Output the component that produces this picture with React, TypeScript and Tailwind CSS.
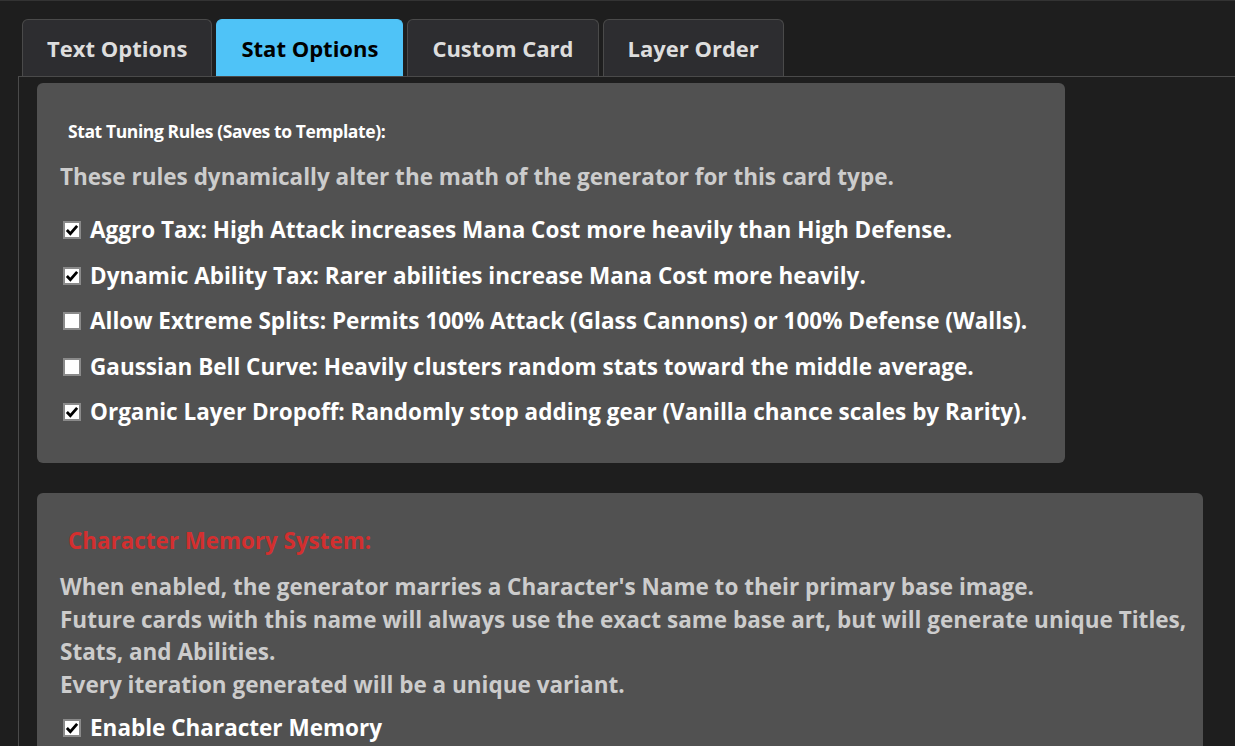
import React, { useState } from 'react';

const tabs = ['Text Options', 'Stat Options', 'Custom Card', 'Layer Order'];

const rules = [
  { label: 'Aggro Tax: High Attack increases Mana Cost more heavily than High Defense.', on: true },
  { label: 'Dynamic Ability Tax: Rarer abilities increase Mana Cost more heavily.', on: true },
  { label: 'Allow Extreme Splits: Permits 100% Attack (Glass Cannons) or 100% Defense (Walls).', on: false },
  { label: 'Gaussian Bell Curve: Heavily clusters random stats toward the middle average.', on: false },
  { label: 'Organic Layer Dropoff: Randomly stop adding gear (Vanilla chance scales by Rarity).', on: true },
];

function Check({ on }: { on: boolean }) {
  return (
    <span className="w-[18px] h-[18px] shrink-0 bg-white border-2 border-[#8a8a8a] flex items-center justify-center">
      {on && (
        <svg viewBox="0 0 12 12" className="w-[14px] h-[14px]">
          <path d="M1.6 6 L4.6 9.2 L10.4 2.4" fill="none" stroke="#000" strokeWidth="2.4" />
        </svg>
      )}
    </span>
  );
}

function Row({ label, on, className = '' }: { label: string; on: boolean; className?: string }) {
  return (
    <label className={`flex items-center gap-[9px] pl-[3px] h-8 text-white ${className}`}>
      <Check on={on} />
      <span>{label}</span>
    </label>
  );
}

export default function App() {
  const [active] = useState(1);
  return (
    <div className="min-h-screen w-[1235px] h-[746px] overflow-hidden bg-[#1e1e1e] border-t border-[#333] font-['Open_Sans','Segoe_UI',sans-serif] font-bold text-[22.5px]">
      {/* tabs */}
      <div className="flex gap-1 pl-[22px] pt-[18px] text-[22px]">
        {tabs.map((t, i) => (
          <div
            key={t}
            className={`h-[57px] px-6 flex items-center rounded-t-[6px] border border-b-0 ${
              i === active ? 'bg-[#4fc3f7] text-black border-[#4fc3f7]' : 'bg-[#2d2d30] text-[#dddddd] border-[#4a4a4a]'
            }`}
          >
            {t}
          </div>
        ))}
      </div>

      {/* panel */}
      <div className="ml-[18px] border-t border-l border-[#4a4a4a] pt-[6px] pl-[18px]">
        <div className="w-[1028px] bg-[#515151] rounded-[6px] pl-[23px] pt-[34px] pb-[35px]">
          <h4 className="pl-2 leading-7 text-white text-[17.5px] tracking-[-0.4px]">Stat Tuning Rules (Saves to Template):</h4>
          <p className="mt-4 leading-8 text-[#cccccc]">These rules dynamically alter the math of the generator for this card type.</p>
          <div className="mt-[21px] flex flex-col gap-[13.5px]">
            {rules.map((r) => (
              <Row key={r.label} label={r.label} on={r.on} />
            ))}
          </div>
        </div>

        <div className="mt-[30px] w-[1166px] bg-[#515151] rounded-[6px] pl-[23px] pr-[4px] pt-[34px] pb-6">
          <h4 className="pl-2 leading-7 text-[#d32f2f] text-[22.4px]">Character Memory System:</h4>
          <div className="mt-4 leading-[32.5px] text-[#cccccc]">
            <p>When enabled, the generator marries a Character's Name to their primary base image.</p>
            <p>Future cards with this name will always use the exact same base art, but will generate unique Titles, Stats, and Abilities.</p>
            <p>Every iteration generated will be a unique variant.</p>
          </div>
          <Row label="Enable Character Memory" on={true} className="mt-[11px]" />
        </div>
      </div>
    </div>
  );
}
